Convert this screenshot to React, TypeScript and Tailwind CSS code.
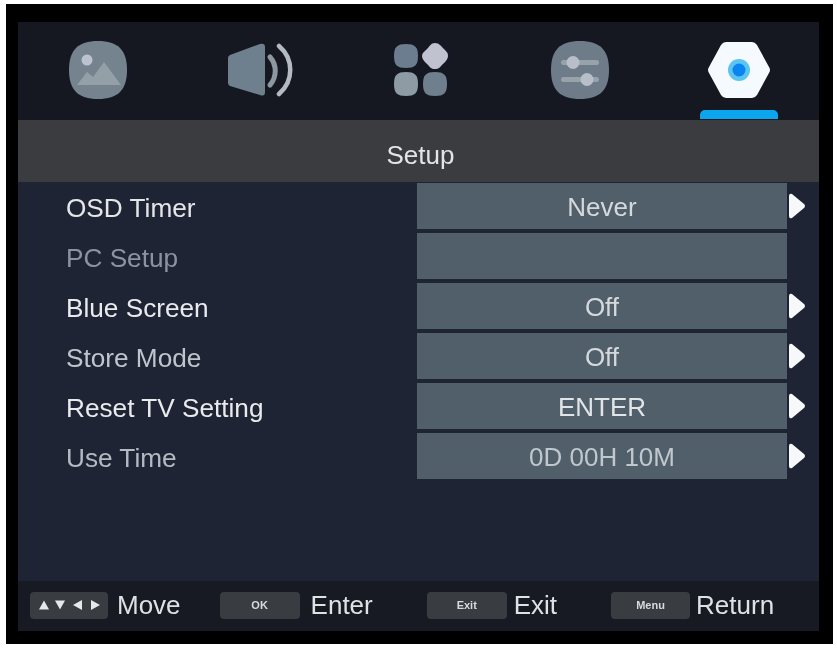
const rows = [
  { label: "OSD Timer", value: "Never", labelColor: "text-[#e4e6e8]", valueColor: "text-[#d5d9dc]", arrow: true },
  { label: "PC Setup", value: "", labelColor: "text-[#8c93a0]", valueColor: "", arrow: false },
  { label: "Blue Screen", value: "Off", labelColor: "text-[#e8eaec]", valueColor: "text-[#d5d9dc]", arrow: true },
  { label: "Store Mode", value: "Off", labelColor: "text-[#c0c4cb]", valueColor: "text-[#d5d9dc]", arrow: true },
  { label: "Reset TV Setting", value: "ENTER", labelColor: "text-[#e8eaec]", valueColor: "text-[#e2e5e7]", arrow: true },
  { label: "Use Time", value: "0D 00H 10M", labelColor: "text-[#b4b9c2]", valueColor: "text-[#c0c7cd]", arrow: true },
];

function PictureIcon() {
  return (
    <svg width="60" height="60" viewBox="0 0 60 60">
      <path d="M30 1C50 1 59 10 59 30C59 50 50 59 30 59C10 59 1 50 1 30C1 10 10 1 30 1Z" fill="#75838f" />
      <circle cx="19" cy="20" r="5.5" fill="#bcc3cf" />
      <path d="M9 45L19 32L25 37L36 22L53 45Z" fill="#94a0a8" />
    </svg>
  );
}

function SpeakerIcon() {
  return (
    <svg width="66" height="56" viewBox="0 0 66 56">
      <path d="M3 14L33 3Q38 2 38 6V51Q38 56 33 54L3 45Q1 44 1 42V17Q1 15 3 14Z" fill="#6e808e" />
      <path d="M43 16C50 24 50 36 43 44" fill="none" stroke="#8b98a2" strokeWidth="5" strokeLinecap="round" />
      <path d="M52 5C67 18 67 40 52 53" fill="none" stroke="#b5bac2" strokeWidth="4.5" strokeLinecap="round" />
    </svg>
  );
}

function AppsIcon() {
  return (
    <svg width="54" height="54" viewBox="0 0 54 54">
      <path d="M12 1C21 1 24 4 24 13C24 22 21 25 12 25C3 25 0 22 0 13C0 4 3 1 12 1Z" fill="#6c7d90" />
      <path d="M41 0C45 0 47 3 50 6C53 9 54 10 54 13C54 16 52 18 49 21C46 24 45 26 41 26C37 26 36 24 33 21C30 18 28 16 28 13C28 10 30 9 33 6C36 3 37 0 41 0Z" fill="#c0c2cf" />
      <path d="M12 29C21 29 24 32 24 41C24 50 21 53 12 53C3 53 0 50 0 41C0 32 3 29 12 29Z" fill="#8e9ba5" />
      <path d="M41 29C50 29 53 32 53 41C53 50 50 53 41 53C32 53 29 50 29 41C29 32 32 29 41 29Z" fill="#707f8d" />
    </svg>
  );
}

function SlidersIcon() {
  return (
    <svg width="60" height="60" viewBox="0 0 60 60">
      <path d="M30 1C50 1 59 10 59 30C59 50 50 59 30 59C10 59 1 50 1 30C1 10 10 1 30 1Z" fill="#6e7c89" />
      <rect x="11" y="20" width="38" height="5" rx="2.5" fill="#98a2ab" />
      <rect x="11" y="37" width="38" height="5" rx="2.5" fill="#98a2ab" />
      <circle cx="23" cy="22.5" r="6.5" fill="#b8bfc8" />
      <circle cx="37" cy="39.5" r="6.5" fill="#b8bfc8" />
    </svg>
  );
}

function HexIcon() {
  return (
    <svg width="64" height="58" viewBox="0 0 64 58">
      <path d="M19 1H45Q48 1 50 4L62 26Q64 29 62 32L50 54Q48 57 45 57H19Q16 57 14 54L2 32Q0 29 2 26L14 4Q16 1 19 1Z" fill="#f4fafd" />
      <circle cx="32" cy="29" r="11" fill="#5cc4f2" />
      <circle cx="32" cy="29" r="6.5" fill="#0a84f0" />
    </svg>
  );
}

function Arrows() {
  return (
    <svg width="61" height="10" viewBox="0 0 61 10" fill="#e6e8ea">
      <path d="M0 9.5L5 0.5L10 9.5Z" />
      <path d="M16 0.5H26L21 9.5Z" />
      <path d="M43 0V10L34 5Z" />
      <path d="M52 0V10L61 5Z" />
    </svg>
  );
}

function KeyHint({ w, gap, text, children }: { w: string; gap: string; text: string; children: React.ReactNode }) {
  return (
    <div className={`flex items-center ${gap}`}>
      <div className={`h-[27px] ${w} flex items-center justify-center rounded-[4px] bg-[#393c40] text-[11px] font-bold text-[#d8dadc]`}>
        {children}
      </div>
      <span className="text-[26px] leading-none text-[#dfe1e3]">{text}</span>
    </div>
  );
}

export default function App() {
  return (
    <div className="min-h-[648px] bg-white pl-[6px] pt-[4px] [font-family:'Liberation_Sans',Arial,sans-serif]">
      <div className="h-[640px] w-[827px] bg-black pl-[12px] pt-[18px]">
        <div className="flex h-[609px] w-[801px] flex-col bg-[#1f2434] blur-[0.7px]">
          <div className="grid h-[98px] grid-cols-5 items-start bg-[#151821] pt-[18px]">
            <div className="flex justify-center">
              <PictureIcon />
            </div>
            <div className="flex justify-center pl-[4px] pt-[1px]">
              <SpeakerIcon />
            </div>
            <div className="flex justify-center pl-[6px] pt-[3px]">
              <AppsIcon />
            </div>
            <div className="flex justify-center pl-[2px]">
              <SlidersIcon />
            </div>
            <div className="flex flex-col items-center pt-[1px]">
              <HexIcon />
              <div className="mt-[11px] h-[9px] w-[78px] rounded-t-[5px] bg-[#0ba6ee]" />
            </div>
          </div>

          <div className="flex h-[62px] items-center justify-center bg-[#3a3c3f] pl-[4px] pt-[8px] text-[26px] text-[#e2e4e6]">
            Setup
          </div>

          <div className="flex flex-1 flex-col gap-[4px] pt-[1px]">
            {rows.map((row) => (
              <div key={row.label} className="flex h-[46px] items-center">
                <span className={`w-[399px] pl-[48px] pt-[5px] text-[26.2px] ${row.labelColor}`}>{row.label}</span>
                <div className={`flex h-full w-[370px] items-center justify-center bg-[#505f6a] pt-[2px] text-[26px] ${row.valueColor}`}>
                  {row.value}
                </div>
                {row.arrow && (
                  <svg className="ml-[1px]" width="18" height="26" viewBox="0 0 18 26">
                    <path d="M1 3Q1 0 4 1L16 11Q18 13 16 15L4 25Q1 26 1 23Z" fill="#f6f8fa" />
                  </svg>
                )}
              </div>
            ))}
          </div>

          <div className="flex h-[50px] items-center bg-[#171a23] pb-[2px] pl-[12px]">
            <KeyHint w="w-[78px]" gap="gap-[9px]" text="Move">
              <Arrows />
            </KeyHint>
            <div className="ml-[39px]">
              <KeyHint w="w-[80px]" gap="gap-[11px]" text="Enter">
                OK
              </KeyHint>
            </div>
            <div className="ml-[54px]">
              <KeyHint w="w-[80px]" gap="gap-[7px]" text="Exit">
                Exit
              </KeyHint>
            </div>
            <div className="ml-[54px]">
              <KeyHint w="w-[79px]" gap="gap-[6px]" text="Return">
                Menu
              </KeyHint>
            </div>
          </div>
        </div>
      </div>
    </div>
  );
}
